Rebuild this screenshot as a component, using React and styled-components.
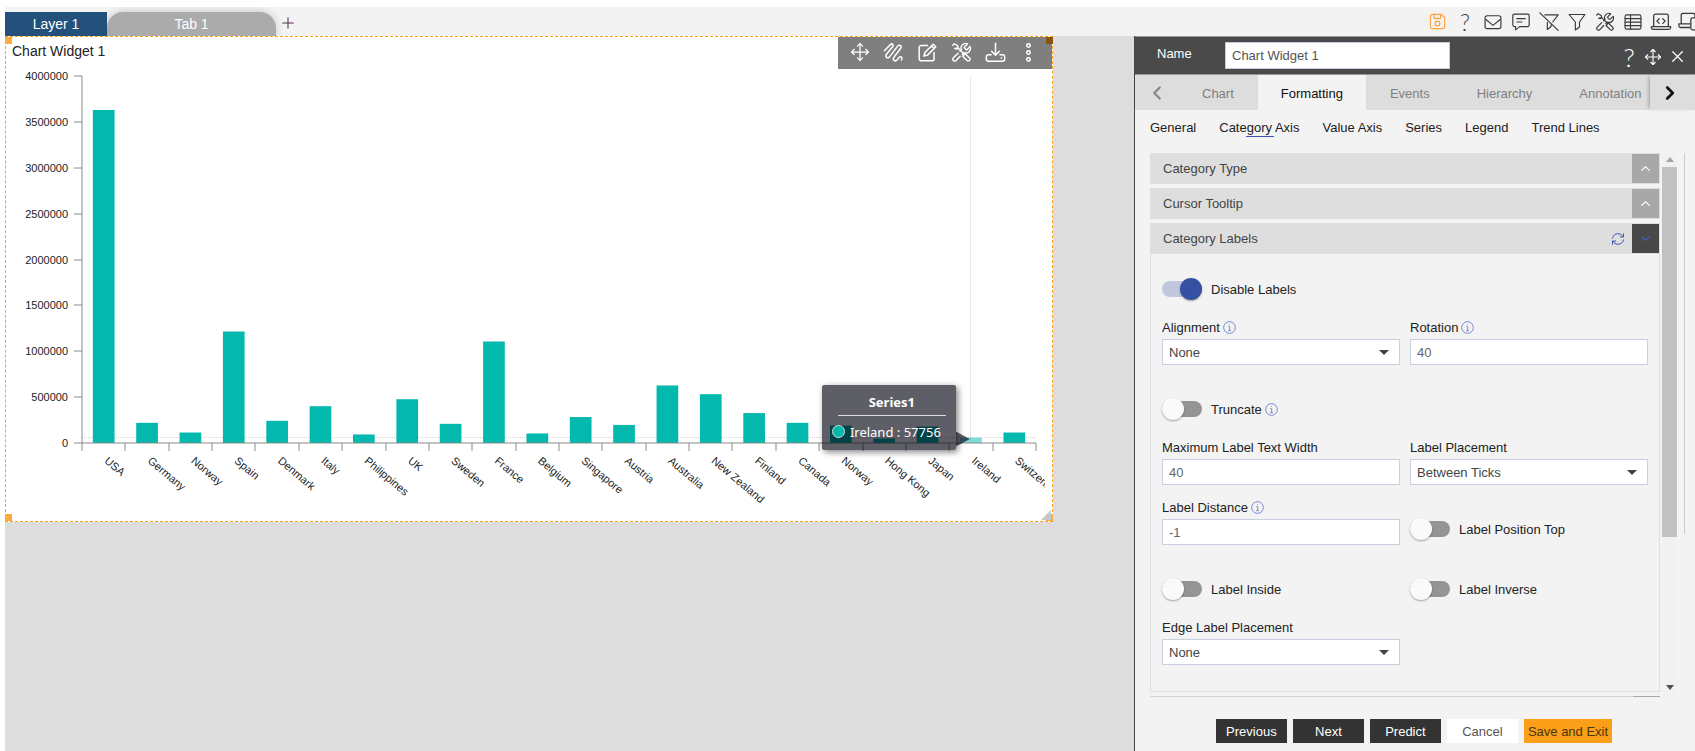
import React, { useState } from "react";
import styled, { createGlobalStyle } from "styled-components";
import { ChevronDown, ChevronUp, ChevronLeft, ChevronRight, Move, X } from "lucide-react";

const countries = [
  { name: "USA", value: 3630000 },
  { name: "Germany", value: 220000 },
  { name: "Norway", value: 114000 },
  { name: "Spain", value: 1215000 },
  { name: "Denmark", value: 242000 },
  { name: "Italy", value: 401000 },
  { name: "Philippines", value: 93000 },
  { name: "UK", value: 477000 },
  { name: "Sweden", value: 209000 },
  { name: "France", value: 1106000 },
  { name: "Belgium", value: 104000 },
  { name: "Singapore", value: 283000 },
  { name: "Austria", value: 197000 },
  { name: "Australia", value: 627000 },
  { name: "New Zealand", value: 532000 },
  { name: "Finland", value: 326000 },
  { name: "Canada", value: 220000 },
  { name: "Norway", value: 190000 },
  { name: "Hong Kong", value: 49000 },
  { name: "Japan", value: 180000 },
  { name: "Ireland", value: 57756, active: true },
  { name: "Switzerland", value: 114000 },
];

const Glyph = ({ size = 20, width = 1.4, children }) => (
  <svg
    width={size}
    height={size}
    viewBox="0 0 24 24"
    fill="none"
    stroke="currentColor"
    strokeWidth={width}
    strokeLinecap="round"
    strokeLinejoin="round"
    aria-hidden="true"
  >
    {children}
  </svg>
);

const SaveIcon = () => (
  <Glyph size={19}>
    <path d="M5.5 3H17l4 4v11.5a2.5 2.5 0 0 1-2.5 2.5h-13A2.5 2.5 0 0 1 3 18.5v-13A2.5 2.5 0 0 1 5.5 3z" />
    <path d="M7.5 3v5H16V3" />
    <circle cx="12" cy="14.5" r="3" />
  </Glyph>
);

const MailIcon = () => (
  <Glyph>
    <rect x="2.5" y="4.5" width="19" height="15.5" rx="2.5" />
    <path d="M3.5 9l8.5 7 8.5-7" />
  </Glyph>
);

const CommentIcon = () => (
  <Glyph>
    <path d="M4 2.5h16a1.8 1.8 0 0 1 1.8 1.8v11.4a1.8 1.8 0 0 1-1.8 1.8h-9.5l-5 4v-4H4a1.8 1.8 0 0 1-1.8-1.8V4.3A1.8 1.8 0 0 1 4 2.5z" />
    <path d="M7 8h10M7 12h6" />
  </Glyph>
);

const FilterIcon = () => (
  <Glyph>
    <path d="M2.5 3h19L15 12v6l-5 3.500V12z" />
  </Glyph>
);

const FilterOffIcon = () => (
  <Glyph>
    <path d="M7 3.5h16L16.500 12M10 12.500V21l4.500-3.500v-2M1 1l22 21" />
  </Glyph>
);

const ToolsIcon = ({ size, width }) => (
  <Glyph size={size} width={width}>
    <path d="M15.500 5.600a1 1 0 0 0 0 1.400l1.500 1.500a1 1 0 0 0 1.400 0l3.300-3.300a5.200 5.200 0 0 1-6.900 6.900L13 13.900M10.500 16.200l-4.800 4.900a2.100 2.100 0 0 1-3-3l5.400-5.300M10.300 10.700l1.700-1.700a5.200 5.200 0 0 1 6.900-6.900l-3.400 3.500" />
    <path d="M2 3.700L3.700 2l3.800 2.200.6 2.600L14.500 13.200M8.100 6.800L6.900 8 4.300 7.500zM13.300 16.200l2.900-2.900 5 5a2 2 0 0 1-2.900 2.900z" />
  </Glyph>
);

const TableIcon = () => (
  <Glyph>
    <rect x="2.5" y="3.5" width="19" height="17" rx="2" />
    <path d="M2.5 8h19M2.5 12.2h19M2.5 16.400h19M9 3.500v17" />
  </Glyph>
);

const LaptopCodeIcon = () => (
  <Glyph size={22}>
    <path d="M4 17V5.5a2 2 0 0 1 2-2h12a2 2 0 0 1 2 2V17M1.500 17h21v1a2 2 0 0 1-2 2h-17a2 2 0 0 1-2-2zM10 8.500L7.500 11l2.500 2.500M14 8.500l2.500 2.500-2.500 2.500" />
  </Glyph>
);

const DevicesIcon = () => (
  <Glyph size={22}>
    <path d="M3.5 14V4.5a2 2 0 0 1 2-2h11a2 2 0 0 1 2 2V6M13 14H1v2a2 2 0 0 0 2 2h10" />
    <rect x="14" y="7.5" width="13" height="13" rx="2" />
  </Glyph>
);

const ScribbleIcon = () => (
  <Glyph size={21} width={1.7}>
    <path d="M1.5 10L8.5 3C10.5 1 13 3.5 11 5.5L4 14C2 17 5 19.5 7.5 17L16.5 5C19 2 22 5 20 7.5L12.5 17.5C10.5 20.5 13.5 23 16 20.5L18.5 17.5C20.5 15.5 23 18 21 20.5" />
  </Glyph>
);

const EditIcon = () => (
  <Glyph size={21} width={1.7}>
    <path d="M12 4H5a2.5 2.5 0 0 0-2.5 2.5V19A2.5 2.5 0 0 0 5 21.5h12a2.5 2.5 0 0 0 2.5-2.5v-7M18.500 2.500l3 3L12 15l-4 1 1-4zM16.500 4.500l3 3" />
  </Glyph>
);

const DownloadIcon = () => (
  <Glyph size={21} width={1.7}>
    <path d="M12 1.5V15M7.5 10.5L12 15l4.500-4.500M7 14.500H4A2.500 2.500 0 0 0 1.500 17v2.500A2.500 2.500 0 0 0 4 22h16a2.500 2.500 0 0 0 2.500-2.500V17a2.500 2.500 0 0 0-2.500-2.500h-3M18.500 18.300h.5" />
  </Glyph>
);

const DotsIcon = () => (
  <Glyph size={21} width={1.7}>
    <circle cx="12" cy="4" r="2" />
    <circle cx="12" cy="12" r="2" />
    <circle cx="12" cy="20" r="2" />
  </Glyph>
);

const RefreshIcon = () => (
  <Glyph size={14} width={1.7}>
    <path d="M2.500 10.500C3.500 5.500 7.500 3 12 3c4 0 7 2 8.500 5M21.500 3v5.500H16M21.500 13.500C20.500 18.500 16.500 21 12 21c-4 0-7-2-8.500-5M2.500 21v-5.500H8" />
  </Glyph>
);

const InfoIcon = () => (
  <InfoMark viewBox="0 0 14 14" aria-hidden="true">
    <circle cx="7" cy="7" r="6.3" />
    <path d="M5.800 6H7.200V10.300M5.600 10.400H8.600M6.900 3.500v.7" />
  </InfoMark>
);

// chart geometry
const LEFT = 76;
const TOP = 7;
const BASE = 374;
const RIGHT = 1030;
const MAX = 4000000;
const STEP = (RIGHT - LEFT) / countries.length;
const toY = (value) => BASE - (value / MAX) * (BASE - TOP);
const yTicks = [0, 1, 2, 3, 4, 5, 6, 7, 8].map((n) => n * 500000);

const BarChart = () => {
  const activeIndex = countries.findIndex((c) => c.active);
  const activeX = LEFT + STEP * (activeIndex + 0.5);
  const activeY = toY(countries[activeIndex].value);

  return (
    <ChartSvg viewBox="0 0 1046 452" role="img" aria-label="Series1 by country">
      <clipPath id="labels">
        <rect x="0" y="376" width="1039" height="76" />
      </clipPath>
      <CursorLine x1={activeX} x2={activeX} y1={TOP} y2={BASE} />
      <CursorLine x1={LEFT} x2={RIGHT} y1={activeY} y2={activeY} />
      {countries.map((c, i) => (
        <Bar
          key={i}
          $active={c.active}
          x={LEFT + STEP * i + STEP / 4}
          y={toY(c.value)}
          width={STEP / 2}
          height={BASE - toY(c.value)}
        />
      ))}
      <AxisLine d={`M${LEFT} ${TOP}V${BASE}H${RIGHT}`} />
      {yTicks.map((t) => (
        <g key={t}>
          <AxisLine d={`M${LEFT - 8} ${Math.round(toY(t))}H${LEFT}`} />
          <AxisText x={LEFT - 14} y={toY(t) + 4} textAnchor="end">
            {t}
          </AxisText>
        </g>
      ))}
      {[...countries, null].map((c, i) => (
        <AxisLine key={i} d={`M${Math.round(LEFT + STEP * i)} ${BASE}v8`} />
      ))}
      <g clipPath="url(#labels)">
        {countries.map((c, i) => (
          <AxisText
            key={i}
            transform={`translate(${LEFT + STEP * (i + 0.5)} 393) rotate(40)`}
          >
            {c.name}
          </AxisText>
        ))}
      </g>
    </ChartSvg>
  );
};

const Switch = ({ label, info, defaultChecked }) => (
  <SwitchLabel>
    <SwitchInput type="checkbox" role="switch" defaultChecked={defaultChecked} />
    <span>{label}</span>
    {info && <InfoIcon />}
  </SwitchLabel>
);

const TextField = ({ id, label, info, value }) => (
  <Field>
    <FieldLabel htmlFor={id}>
      {label}
      {info && <InfoIcon />}
    </FieldLabel>
    <TextInput id={id} defaultValue={value} />
  </Field>
);

const SelectField = ({ id, label, info, options }) => (
  <Field>
    <FieldLabel htmlFor={id}>
      {label}
      {info && <InfoIcon />}
    </FieldLabel>
    <SelectBox>
      <Select id={id}>
        {options.map((o) => (
          <option key={o}>{o}</option>
        ))}
      </Select>
    </SelectBox>
  </Field>
);

const tabs = ["Chart", "Formatting", "Events", "Hierarchy", "Annotation"];
const subTabs = ["General", "Category Axis", "Value Axis", "Series", "Legend", "Trend Lines"];

export default function App() {
  const [tab, setTab] = useState("Formatting");
  const [subTab, setSubTab] = useState("Category Axis");

  return (
    <Page>
      <GlobalStyle />
      <TopBar>
        <LayerTab>Layer 1</LayerTab>
        <PageTab>Tab 1</PageTab>
        <AddButton aria-label="Add tab">
          <Glyph size={16}>
            <path d="M12 4v16M4 12h16" />
          </Glyph>
        </AddButton>
        <TopIcons>
          <IconButton $accent aria-label="Save"><SaveIcon /></IconButton>
          <IconButton aria-label="Help"><HelpMark>?</HelpMark></IconButton>
          <IconButton aria-label="Mail"><MailIcon /></IconButton>
          <IconButton aria-label="Comments"><CommentIcon /></IconButton>
          <IconButton aria-label="Clear filter"><FilterOffIcon /></IconButton>
          <IconButton aria-label="Filter"><FilterIcon /></IconButton>
          <IconButton aria-label="Tools"><ToolsIcon size={20} width={1.4} /></IconButton>
          <IconButton aria-label="Table"><TableIcon /></IconButton>
          <IconButton aria-label="Source"><LaptopCodeIcon /></IconButton>
          <IconButton aria-label="Devices"><DevicesIcon /></IconButton>
        </TopIcons>
      </TopBar>

      <Main>
        <Canvas>
          <Widget>
            <WidgetHead>
              <WidgetTitle>Chart Widget 1</WidgetTitle>
              <WidgetTools>
                <ToolButton aria-label="Move"><Move size={20} strokeWidth={1.5} /></ToolButton>
                <ToolButton aria-label="Draw"><ScribbleIcon /></ToolButton>
                <ToolButton aria-label="Edit"><EditIcon /></ToolButton>
                <ToolButton aria-label="Tools"><ToolsIcon size={21} width={1.6} /></ToolButton>
                <ToolButton aria-label="Download"><DownloadIcon /></ToolButton>
                <ToolButton aria-label="More"><DotsIcon /></ToolButton>
              </WidgetTools>
            </WidgetHead>
            <ChartArea>
              <BarChart />
              <Tooltip>
                <TooltipTitle>Series1</TooltipTitle>
                <TooltipRow>
                  <Dot />
                  Ireland : 57756
                </TooltipRow>
              </Tooltip>
            </ChartArea>
            <ResizeGrip />
            <Handle $top $left />
            <Handle $top $dark />
            <Handle $left />
            <Handle />
          </Widget>
        </Canvas>

        <Panel>
          <PanelHead>
            <NameLabel htmlFor="name">Name</NameLabel>
            <NameInput id="name" defaultValue="Chart Widget 1" />
            <PanelActions>
              <PanelButton aria-label="Help"><HelpMark $large>?</HelpMark></PanelButton>
              <PanelButton aria-label="Move"><Move size={18} strokeWidth={1.5} /></PanelButton>
              <PanelButton aria-label="Close"><X size={19} strokeWidth={1.6} /></PanelButton>
            </PanelActions>
          </PanelHead>

          <TabRow>
            <TabArrow aria-label="Previous tabs" $muted>
              <ChevronLeft size={22} strokeWidth={2.5} />
            </TabArrow>
            <TabList>
              {tabs.map((t) => (
                <TabButton key={t} $active={t === tab} onClick={() => setTab(t)}>
                  {t}
                </TabButton>
              ))}
            </TabList>
            <TabArrow aria-label="Next tabs" $edge>
              <ChevronRight size={22} strokeWidth={3} />
            </TabArrow>
          </TabRow>

          <SubTabs>
            {subTabs.map((t) => (
              <SubTab key={t} $active={t === subTab} onClick={() => setSubTab(t)}>
                {t}
              </SubTab>
            ))}
          </SubTabs>

          <Scroller>
            <Sections>
              <SectionHead>
                <SectionTitle>Category Type</SectionTitle>
                <SectionToggle aria-label="Expand Category Type"><ChevronUp size={15} /></SectionToggle>
              </SectionHead>
              <SectionHead>
                <SectionTitle>Cursor Tooltip</SectionTitle>
                <SectionToggle aria-label="Expand Cursor Tooltip"><ChevronUp size={15} /></SectionToggle>
              </SectionHead>
              <div>
                <SectionHead>
                  <SectionTitle>Category Labels</SectionTitle>
                  <ResetButton aria-label="Reset"><RefreshIcon /></ResetButton>
                  <SectionToggle $open aria-label="Collapse Category Labels">
                    <ChevronDown size={15} />
                  </SectionToggle>
                </SectionHead>
                <SectionBody>
                  <Wide>
                    <Switch label="Disable Labels" defaultChecked />
                  </Wide>
                  <SelectField id="alignment" label="Alignment" info options={["None"]} />
                  <TextField id="rotation" label="Rotation" info value="40" />
                  <Wide>
                    <Switch label="Truncate" info />
                  </Wide>
                  <TextField id="max-width" label="Maximum Label Text Width" value="40" />
                  <SelectField id="placement" label="Label Placement" options={["Between Ticks"]} />
                  <TextField id="distance" label="Label Distance" info value="-1" />
                  <Switch label="Label Position Top" />
                  <Switch label="Label Inside" />
                  <Switch label="Label Inverse" />
                  <SelectField id="edge" label="Edge Label Placement" options={["None"]} />
                </SectionBody>
              </div>
              <NextSection />
            </Sections>
            <ScrollTrack>
              <ScrollArrow $up />
              <ScrollThumb />
              <ScrollArrow />
            </ScrollTrack>
            <OuterTrack />
          </Scroller>

          <Footer>
            <ActionButton>Previous</ActionButton>
            <ActionButton>Next</ActionButton>
            <ActionButton>Predict</ActionButton>
            <ActionButton $kind="plain">Cancel</ActionButton>
            <ActionButton $kind="save">Save and Exit</ActionButton>
          </Footer>
        </Panel>
      </Main>
    </Page>
  );
}

const GlobalStyle = createGlobalStyle`
  * {
    box-sizing: border-box;
  }

  body {
    margin: 0;
    background: white;
    font-family: "Liberation Sans", Arial, sans-serif;
    font-size: 13px;
    color: #222;
  }

  button, input, select {
    font: inherit;
  }

  button {
    border: 0;
    padding: 0;
    background: none;
    color: inherit;
    cursor: pointer;
  }
`;

const Page = styled.div`
  display: flex;
  flex-direction: column;
  min-height: 100vh;
  padding: 7px 0 0 5px;
  overflow: hidden;
`;

const TopBar = styled.header`
  display: flex;
  align-items: flex-end;
  height: 29px;
  background: #f3f3f3;
`;

const LayerTab = styled.button`
  width: 102px;
  height: 24px;
  background: #23517c;
  color: white;
  font-size: 14px;
`;

const PageTab = styled.button`
  width: 169px;
  height: 24px;
  border-radius: 16px 16px 0 0;
  background: #ababab;
  color: white;
  font-size: 14px;
  box-shadow: 0 0 8px rgba(0, 0, 0, 0.2);
  clip-path: inset(-5px -9px 0 0);
`;

const AddButton = styled.button`
  display: flex;
  align-items: center;
  height: 26px;
  margin-left: 4px;
  color: #4b1d4d;
`;

const TopIcons = styled.div`
  display: flex;
  align-self: center;
  gap: 4px;
  margin-left: auto;
  margin-right: -6px;
`;

const IconButton = styled.button`
  display: flex;
  align-items: center;
  justify-content: center;
  width: 24px;
  height: 26px;
  color: ${({ $accent }) => ($accent ? "#ff9f38" : "#3a3a3a")};

  svg {
    flex: none;
  }
`;

const HelpMark = styled.span`
  font-family: Lato, "Open Sans", sans-serif;
  font-size: ${({ $large }) => ($large ? "26px" : "23px")};
  font-weight: 300;
  line-height: 22px;
`;

const Main = styled.main`
  display: flex;
  flex: 1;
`;

const Canvas = styled.section`
  flex: 1;
  min-width: 0;
  padding-right: 81px;
  background: #ddd;
`;

const Widget = styled.article`
  position: relative;
  border: 1px dashed #f9a11b;
  background: white;
`;

const WidgetHead = styled.div`
  display: flex;
  justify-content: space-between;
  height: 32px;
`;

const WidgetTitle = styled.h1`
  margin: 0;
  padding: 6px;
  font-size: 14px;
  font-weight: 400;
  line-height: 16px;
`;

const WidgetTools = styled.div`
  display: flex;
  justify-content: space-between;
  align-items: flex-start;
  width: 214px;
  padding: 4px 12px 4px 11px;
  background: #7f7f7f;
`;

const ToolButton = styled.button`
  display: flex;
  justify-content: center;
  align-items: center;
  width: 22px;
  height: 22px;
  color: white;

  svg {
    flex: none;
  }
`;

const ChartArea = styled.div`
  position: relative;
`;

const ChartSvg = styled.svg`
  display: block;
  width: 100%;
  height: auto;
`;

const Bar = styled.rect`
  fill: #03b8ac;
  opacity: ${({ $active }) => ($active ? 0.5 : 1)};
`;

const AxisLine = styled.path`
  fill: none;
  stroke: #8a8a8a;
`;

const CursorLine = styled.line`
  stroke: #d4d4d4;
  stroke-dasharray: 1 1;
  shape-rendering: crispEdges;
`;

const AxisText = styled.text`
  fill: #222;
  font-size: 11px;
`;

const Tooltip = styled.div`
  position: absolute;
  left: 78%;
  top: 70%;
  width: 134px;
  height: 65px;
  padding: 7px 10px 0 16px;
  border-radius: 2px;
  background: rgba(0, 0, 12, 0.63);
  box-shadow: 2px 2px 6px rgba(0, 0, 0, 0.5);
  color: white;
  font-family: "Noto Sans", sans-serif;
  font-size: 13px;

  &::after {
    content: "";
    position: absolute;
    left: 100%;
    top: 46px;
    width: 14px;
    height: 15px;
    background: rgba(0, 0, 12, 0.63);
    clip-path: polygon(0 0, 100% 50%, 0 100%);
  }
`;

const TooltipTitle = styled.div`
  height: 24px;
  border-bottom: 1px solid #ddd;
  font-weight: 700;
  line-height: 20px;
  text-align: center;
`;

const TooltipRow = styled.div`
  display: flex;
  align-items: center;
  gap: 5px;
  height: 31px;
  margin-left: -6px;
  white-space: nowrap;
`;

const Dot = styled.span`
  flex: none;
  width: 13px;
  height: 13px;
  border: 1px solid #ddd;
  border-radius: 50%;
  background: #03b8ac;
`;

const Handle = styled.span`
  position: absolute;
  ${({ $top }) => ($top ? "top: 0;" : "bottom: 0;")}
  ${({ $left }) => ($left ? "left: -1px;" : "right: -1px;")}
  width: 7px;
  height: 7px;
  background: ${({ $dark }) => ($dark ? "#875411" : "#fbac3f")};
`;

const ResizeGrip = styled.span`
  position: absolute;
  right: 1px;
  bottom: 1px;
  z-index: 1;
  width: 10px;
  height: 10px;
  background: #c6c6c6;
  clip-path: polygon(100% 0, 100% 100%, 0 100%);
`;

const Panel = styled.aside`
  display: flex;
  flex-direction: column;
  flex: 0 0 561px;
  min-width: 0;
  border-left: 1px solid #444;
  background: #f3f3f3;
`;

const PanelHead = styled.div`
  display: flex;
  align-items: center;
  height: 39px;
  padding-left: 22px;
  border-top: 1px solid #999;
  border-bottom: 1px solid #999;
  background: #4a4a4a;
  color: white;
`;

const NameLabel = styled.label`
  width: 68px;
  padding-bottom: 4px;
`;

const NameInput = styled.input`
  width: 225px;
  height: 27px;
  padding: 0 6px;
  border: 1px solid #c3cbe0;
  background: white;
  color: #555;
`;

const PanelActions = styled.div`
  display: flex;
  align-items: center;
  gap: 2px;
  margin-left: auto;
  padding: 2px 7px 0 0;
`;

const PanelButton = styled.button`
  display: flex;
  align-items: center;
  justify-content: center;
  width: 22px;
  height: 26px;

  svg {
    flex: none;
  }
`;

const TabRow = styled.div`
  display: flex;
  height: 35px;
  background: #ddd;
`;

const TabArrow = styled.button`
  display: flex;
  align-items: center;
  justify-content: center;
  flex: none;
  width: ${({ $edge }) => ($edge ? "45px" : "44px")};
  padding-right: ${({ $edge }) => ($edge ? "6px" : "0")};
  background: #ddd;
  color: ${({ $muted }) => ($muted ? "#888" : "#111")};
  box-shadow: ${({ $edge }) => ($edge ? "-3px 0 4px -2px rgba(0, 0, 0, 0.3)" : "none")};
  z-index: 1;
`;

const TabList = styled.nav`
  display: flex;
  flex: 1;
  gap: 1px;
  min-width: 0;
  overflow: hidden;
`;

const TabButton = styled.button`
  flex: none;
  padding: 2px 23px 0;
  background: ${({ $active }) => ($active ? "#f3f3f3" : "transparent")};
  color: ${({ $active }) => ($active ? "#111" : "#808080")};
`;

const SubTabs = styled.nav`
  display: flex;
  gap: 23px;
  height: 43px;
  padding: 7px 15px 0;
`;

const SubTab = styled.button`
  position: relative;
  height: 20px;
  white-space: nowrap;

  &::after {
    content: "";
    display: ${({ $active }) => ($active ? "block" : "none")};
    position: absolute;
    left: 33%;
    bottom: 0;
    width: 28px;
    height: 1px;
    background: #3f51b5;
  }
`;

const Scroller = styled.div`
  display: flex;
  padding: 0 10px 0 15px;
`;

const Sections = styled.div`
  display: flex;
  flex: 1;
  flex-direction: column;
  gap: 4px;
  min-width: 0;
`;

const SectionHead = styled.div`
  display: flex;
  align-items: center;
  height: 31px;
  padding: 0 1px 0 13px;
  background: #dedede;
  color: #444;
`;

const SectionTitle = styled.h2`
  flex: 1;
  margin: 0;
  font-size: 13px;
  font-weight: 400;
`;

const SectionToggle = styled.button`
  display: flex;
  align-items: center;
  justify-content: center;
  width: 27px;
  height: 29px;
  background: ${({ $open }) => ($open ? "#484848" : "#a8a8a8")};
  color: ${({ $open }) => ($open ? "#3f60c0" : "white")};
`;

const ResetButton = styled.button`
  display: flex;
  margin-right: 7px;
  color: #3f51b5;
`;

const SectionBody = styled.div`
  display: grid;
  grid-template-columns: 1fr 1fr;
  gap: 10px;
  padding: 1px 11px 26px;
  border: 1px solid #dedede;
  border-top: 0;
`;

const Wide = styled.div`
  grid-column: 1 / -1;
`;

const Field = styled.div`
  display: flex;
  flex-direction: column;
  min-width: 0;
`;

const FieldLabel = styled.label`
  display: flex;
  align-items: center;
  gap: 3px;
  height: 24px;
`;

const InfoMark = styled.svg`
  width: 13px;
  height: 13px;
  fill: none;
  stroke: #6f83cc;
`;

const TextInput = styled.input`
  width: 100%;
  height: 26px;
  padding: 0 6px;
  border: 1px solid #c8cfe0;
  background: white;
  color: #666;
`;

const SelectBox = styled.div`
  position: relative;

  &::after {
    content: "";
    position: absolute;
    right: 11px;
    top: 11px;
    border: 5px solid transparent;
    border-top-color: #444;
    border-bottom: 0;
    pointer-events: none;
  }
`;

const Select = styled.select`
  display: block;
  width: 100%;
  height: 26px;
  padding: 0 6px;
  border: 1px solid #c8cfe0;
  border-radius: 0;
  background: white;
  color: #444;
  appearance: none;
`;

const SwitchLabel = styled.label`
  display: flex;
  align-items: center;
  gap: 3px;
  height: 24px;
  margin: 22px 0 4px;
`;

const SwitchInput = styled.input`
  position: relative;
  width: 40px;
  height: 22px;
  margin: 0 6px 0 0;
  appearance: none;

  &::before {
    content: "";
    position: absolute;
    inset: 3px 0;
    border-radius: 8px;
    background: #949494;
  }

  &::after {
    content: "";
    position: absolute;
    left: 0;
    top: 0;
    width: 22px;
    height: 22px;
    border-radius: 50%;
    background: #fafafa;
    box-shadow: 0 1px 2px rgba(0, 0, 0, 0.35);
  }

  &:checked::before {
    background: #c0c7de;
  }

  &:checked::after {
    left: 18px;
    background: #3650a2;
  }
`;

const NextSection = styled.div`
  height: 1px;
  background: linear-gradient(to left, #a8a8a8 27px, #d4d4d4 27px);
`;

const ScrollTrack = styled.div`
  display: flex;
  flex-direction: column;
  width: 15px;
  margin-left: 2px;
  background: #f1f1f1;
`;

const ScrollArrow = styled.span`
  align-self: center;
  margin: ${({ $up }) => ($up ? "4px 0 5px" : "auto 0 7px")};
  border: 4px solid transparent;
  ${({ $up }) =>
    $up
      ? "border-bottom: 5px solid #a3a3a3; border-top: 0;"
      : "border-top: 5px solid #505050; border-bottom: 0;"}
`;

const ScrollThumb = styled.span`
  flex: 0 0 68%;
  background: #c1c1c1;
`;

const OuterTrack = styled.div`
  width: 8px;
  height: 70%;
  border-right: 1px solid #ccc;
`;

const Footer = styled.div`
  display: flex;
  justify-content: center;
  gap: 6px;
  margin-top: auto;
  padding: 20px 2px 8px 0;
`;

const buttonColors = {
  dark: "background: #333; color: white;",
  plain: "background: white; color: #555;",
  save: "background: #fb9f18; color: #4a3510;",
};

const ActionButton = styled.button`
  min-width: 71px;
  height: 24px;
  padding: 0 4px;
  ${({ $kind = "dark" }) => buttonColors[$kind]}
`;
